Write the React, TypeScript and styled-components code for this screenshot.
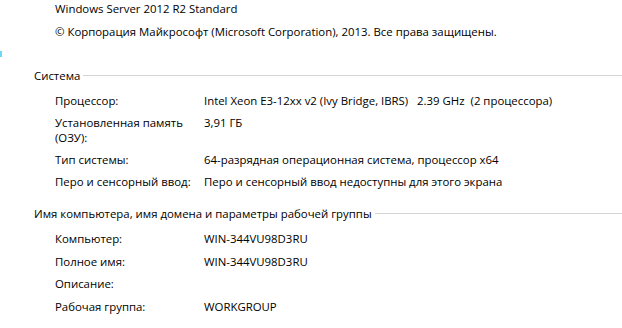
import React from 'react';
import styled, {createGlobalStyle} from 'styled-components';

const GlobalStyle = createGlobalStyle`
  html, body {
    margin: 0;
    padding: 0;
    background: #ffffff;
  }
  body {
    font-family: 'Open Sans', 'Noto Sans', sans-serif;
    font-size: 11.4px;
    color: #000000;
  }
`;

const Page = styled.div`
  position: relative;
  width: 622px;
  height: 328px;
  overflow: hidden;
  padding-top: 1px;
  box-sizing: border-box;
`;

const LogoEdge = styled.div`
  position: absolute;
  left: 0;
  top: 51px;
  width: 2px;
  height: 6px;
  background: #6fd6f6;
`;

const Edition = styled.div`
  padding-left: 55px;
  display: flex;
  flex-direction: column;
  gap: 8px;
  line-height: 15px;
`;

const Section = styled.section<{$top: number}>`
  margin-top: ${(p) => p.$top}px;
`;

const Header = styled.div`
  display: flex;
  align-items: center;
  padding-left: 34px;
  line-height: 15px;

  &::after {
    content: '';
    flex: 1;
    height: 1px;
    margin-left: 3px;
    background: #d4d4d4;
  }
`;

const Rows = styled.div<{$gap: number}>`
  display: grid;
  grid-template-columns: 149px auto;
  row-gap: ${(p) => p.$gap}px;
  padding-left: 55px;
  margin-top: 10px;
  line-height: 15px;
`;

const Label = styled.div`
  width: 146px;
`;

const Value = styled.div`
  white-space: pre;
`;

type Row = [string, string];

const system: Row[] = [
  ['Процессор:', 'Intel Xeon E3-12xx v2 (Ivy Bridge, IBRS)   2.39 GHz  (2 процессора)'],
  ['Установленная память (ОЗУ):', '3,91 ГБ'],
  ['Тип системы:', '64-разрядная операционная система, процессор x64'],
  ['Перо и сенсорный ввод:', 'Перо и сенсорный ввод недоступны для этого экрана'],
];

const computer: Row[] = [
  ['Компьютер:', 'WIN-344VU98D3RU'],
  ['Полное имя:', 'WIN-344VU98D3RU'],
  ['Описание:', ''],
  ['Рабочая группа:', 'WORKGROUP'],
];

const InfoRows = ({rows, gap}: {rows: Row[]; gap: number}) => (
  <Rows $gap={gap}>
    {rows.map(([label, value]) => (
      <React.Fragment key={label}>
        <Label>{label}</Label>
        <Value>{value}</Value>
      </React.Fragment>
    ))}
  </Rows>
);

export default function App() {
  return (
    <Page>
      <GlobalStyle />
      <LogoEdge />
      <Edition>
        <div>Windows Server 2012 R2 Standard</div>
        <div>© Корпорация Майкрософт (Microsoft Corporation), 2013. Все права защищены.</div>
      </Edition>
      <Section $top={29}>
        <Header>Система</Header>
        <InfoRows rows={system} gap={7} />
      </Section>
      <Section $top={17}>
        <Header>Имя компьютера, имя домена и параметры рабочей группы</Header>
        <InfoRows rows={computer} gap={7.67} />
      </Section>
    </Page>
  );
}
